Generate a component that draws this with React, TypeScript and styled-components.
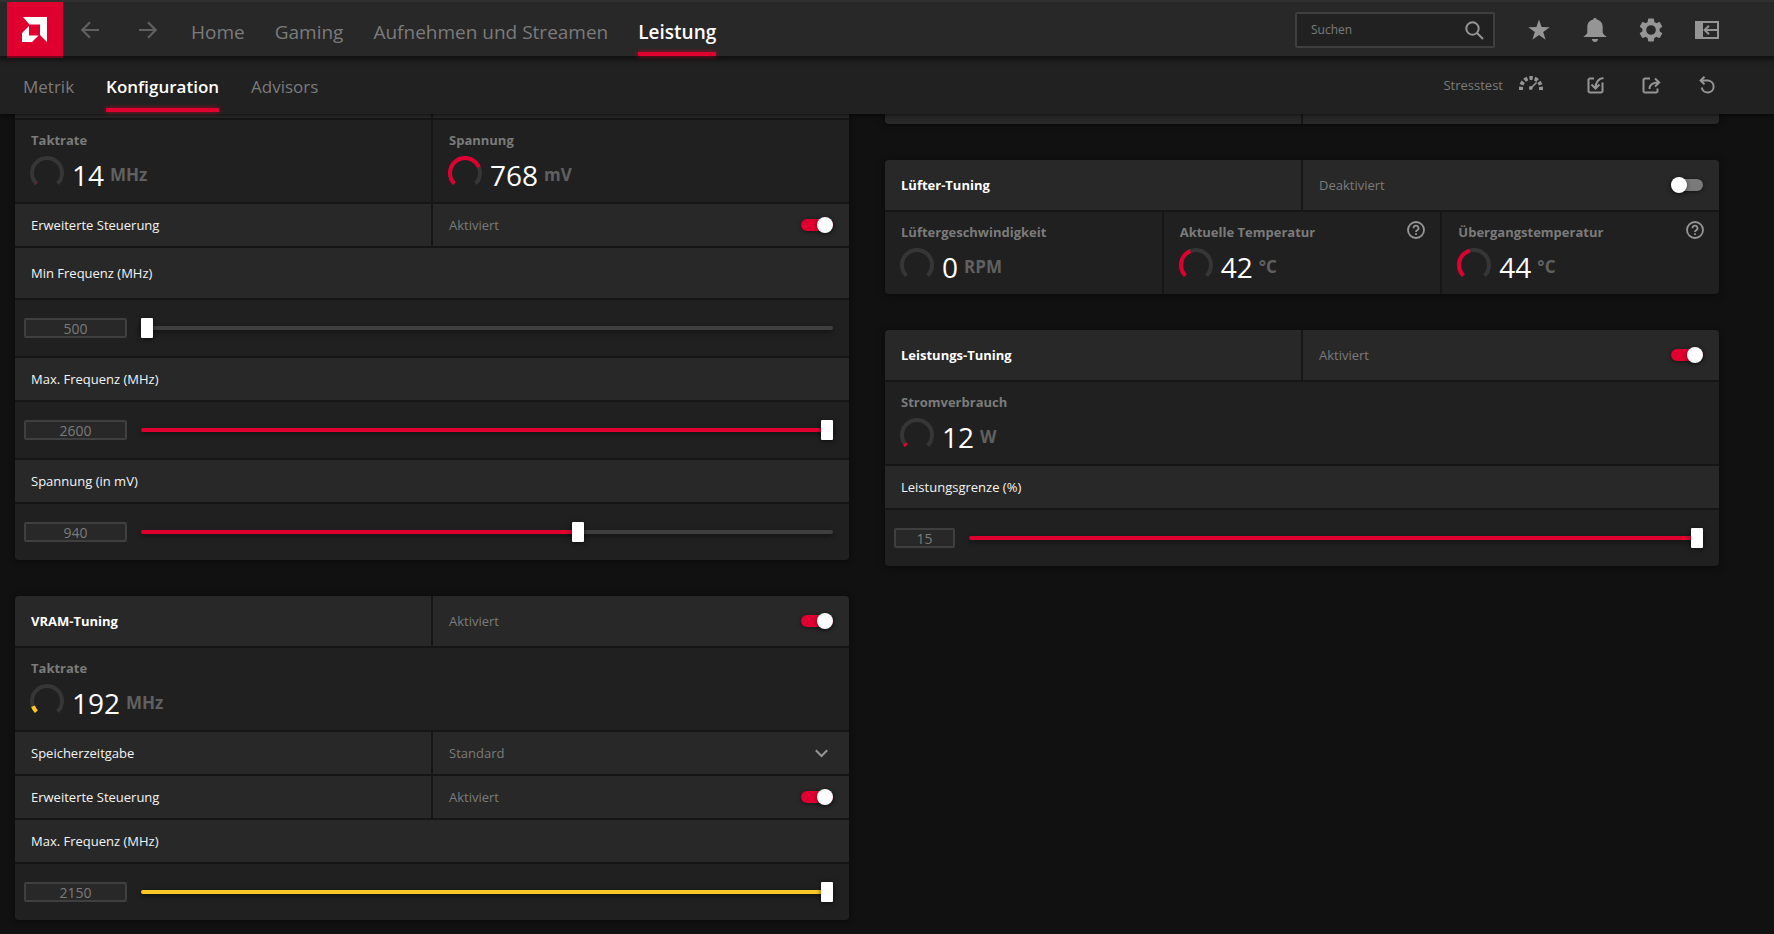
import React, { useId, useState } from "react";
import styled, { createGlobalStyle, css } from "styled-components";

const color = {
  page: "#111111",
  bar: "#282828",
  subBar: "#212121",
  row: "#282828",
  well: "#202020",
  line: "#161616",
  edge: "#3f3f3f",
  muted: "#7b7b7b",
  icon: "#959595",
  red: "#e0002f",
  yellow: "#ffc627",
};

const GlobalStyle = createGlobalStyle`
  * { box-sizing: border-box; }
  html { height: 100%; }
  body {
    margin: 0;
    height: 100%;
    overflow: hidden;
    background: ${color.page};
    color: #fff;
    font-family: "Segoe UI", "Open Sans", "Noto Sans", sans-serif;
    font-size: 13px;
    line-height: 18px;
  }
  #root { height: 100%; }
  button, input, select { font: inherit; color: inherit; margin: 0; }
`;

const Page = styled.div`
  display: flex;
  flex-direction: column;
  height: 100%;
`;

const TopBar = styled.header`
  position: relative;
  z-index: 3;
  display: flex;
  flex-shrink: 0;
  height: 56px;
  padding: 0 55px 0 7px;
  border-top: 2px solid #303030;
  background: ${color.bar};
  box-shadow: 0 2px 5px 2px rgba(0, 0, 0, 0.5);
`;

const Logo = styled.a`
  display: block;
  width: 56px;
  height: 56px;
  background: ${color.red};
  border-bottom: 2px solid #78001c;
`;

const IconButton = styled.button`
  display: grid;
  place-items: center;
  width: 24px;
  height: 24px;
  padding: 0;
  border: 0;
  background: none;
  color: ${color.icon};
`;

const History = styled.div`
  display: flex;
  align-items: center;
  gap: 34px;
  padding: 2px 31px 0 15px;
  ${IconButton} {
    color: #606060;
  }
`;

const Nav = styled.nav<{ $size: number; $gap: number }>`
  display: flex;
  gap: ${(p) => p.$gap}px;
  font-size: ${(p) => p.$size}px;
`;

const NavLink = styled.a<{ $active?: boolean }>`
  display: flex;
  align-items: center;
  padding: 9px 0 4px;
  color: ${color.muted};
  text-decoration: none;
  white-space: nowrap;
  ${(p) =>
    p.$active &&
    css`
      position: relative;
      color: #fff;
      font-weight: 600;
      &::after {
        content: "";
        position: absolute;
        left: 0;
        right: 0;
        bottom: 0;
        height: 4px;
        background: ${color.red};
        box-shadow: 0 0 5px rgba(224, 0, 47, 0.7);
      }
    `}
`;

const Tools = styled.div`
  display: flex;
  align-items: center;
  gap: 32px;
  margin-left: auto;
  padding-top: 2px;
`;

const SearchBox = styled.label`
  display: flex;
  align-items: center;
  width: 200px;
  height: 36px;
  padding: 0 9px 0 14px;
  border: 2px solid ${color.edge};
  border-radius: 2px;
  background: #212121;
  color: ${color.icon};
`;

const SearchInput = styled.input`
  flex: 1;
  min-width: 0;
  padding: 0;
  border: 0;
  outline: 0;
  background: none;
  font-size: 12px;
  &::placeholder {
    color: ${color.muted};
    opacity: 1;
  }
`;

const SubBar = styled.div`
  position: relative;
  z-index: 2;
  display: flex;
  flex-shrink: 0;
  height: 58px;
  padding: 0 55px 2px 23px;
  background: ${color.subBar};
  box-shadow: 0 1px 4px rgba(0, 0, 0, 0.6);
`;

const StressButton = styled.button`
  display: flex;
  align-items: center;
  gap: 16px;
  margin-right: 8px;
  padding: 0;
  border: 0;
  background: none;
  color: ${color.muted};
  line-height: 22px;
  svg {
    color: ${color.icon};
    margin-bottom: 4px;
  }
`;

const Workspace = styled.main`
  display: grid;
  grid-template-columns: minmax(0, 1fr) minmax(0, 1fr);
  align-items: start;
  gap: 36px;
  flex: 1;
  min-height: 0;
  padding: 0 55px 0 15px;
  overflow: hidden;
`;

const Column = styled.div<{ $scrolled: number }>`
  display: grid;
  gap: 36px;
  margin-top: -${(p) => p.$scrolled}px;
`;

const Card = styled.section`
  display: grid;
  gap: 2px;
  border-radius: 4px;
  overflow: hidden;
  background: ${color.line};
  box-shadow: 0 1px 6px rgba(0, 0, 0, 0.5);
`;

const Cells = styled.div<{ $count: number }>`
  display: grid;
  grid-template-columns: repeat(${(p) => p.$count}, minmax(0, 1fr));
  gap: 2px;
`;

const Cell = styled.div<{ $tall?: boolean }>`
  display: flex;
  align-items: center;
  justify-content: space-between;
  height: ${(p) => (p.$tall ? 50 : 42)}px;
  padding: 0 16px;
  background: ${color.row};
`;

const Title = styled.label`
  font-weight: 700;
`;

const Caption = styled.label`
  color: #f4f4f4;
`;

const State = styled.span`
  color: ${color.muted};
`;

const Switch = styled.input`
  appearance: none;
  display: flex;
  width: 32px;
  height: 12px;
  border-radius: 6px;
  background: #7a7a7a;
  box-shadow: 0 1px 4px rgba(0, 0, 0, 0.5);
  &::before {
    content: "";
    width: 16px;
    height: 16px;
    margin-top: -2px;
    border-radius: 50%;
    background: #fff;
    box-shadow: 0 1px 4px rgba(0, 0, 0, 0.5);
  }
  &:checked {
    justify-content: flex-end;
    background: ${color.red};
  }
`;

const SelectCell = styled.div`
  display: grid;
  grid-template-columns: minmax(0, 1fr);
  align-items: center;
  height: 42px;
  background: ${color.row};
  > * {
    grid-area: 1 / 1;
  }
  svg {
    justify-self: end;
    margin-right: 21px;
    color: ${color.icon};
    pointer-events: none;
  }
`;

const Select = styled.select`
  appearance: none;
  width: 100%;
  height: 42px;
  padding: 0 16px;
  border: 0;
  background: none;
  color: ${color.muted};
`;

const MetricCell = styled.div`
  height: 82px;
  padding: 9px 15px 0 16px;
  background: ${color.well};
`;

const MetricHead = styled.div`
  display: flex;
  justify-content: space-between;
  height: 24px;
  color: ${color.muted};
  font-weight: 700;
  line-height: 23px;
  ${IconButton} {
    width: 18px;
    height: 18px;
  }
`;

const Reading = styled.div`
  display: flex;
  align-items: center;
  height: 40px;
`;

const Dial = styled.svg`
  margin: 0 8px 0 -1px;
`;

const Value = styled.span`
  padding-top: 4px;
  color: #fff;
  font-size: 28px;
  line-height: 40px;
`;

const Unit = styled.span`
  margin-left: 6px;
  padding-top: 4px;
  color: #606060;
  font-size: 17px;
  font-weight: 700;
`;

const SliderCell = styled.div`
  display: flex;
  align-items: center;
  gap: 14px;
  height: 56px;
  padding: 0 16px 0 9px;
  background: ${color.well};
`;

const NumberBox = styled.input<{ $narrow?: boolean }>`
  width: ${(p) => (p.$narrow ? 61 : 103)}px;
  height: 20px;
  padding: 0;
  border: 2px solid ${color.edge};
  border-radius: 2px;
  background: ${color.row};
  color: ${color.muted};
  font-size: 14px;
  text-align: center;
`;

const Range = styled.input<{ $tint: string }>`
  appearance: none;
  flex: 1;
  min-width: 0;
  height: 20px;
  background: none;
  &::-webkit-slider-runnable-track {
    height: 4px;
    border-radius: 2px;
    background: linear-gradient(${(p) => p.$tint} 0 0) left / var(--fill) 100% no-repeat ${color.edge};
    box-shadow: 0 2px 5px rgba(0, 0, 0, 0.5);
  }
  &::-webkit-slider-thumb {
    appearance: none;
    width: 12px;
    height: 20px;
    margin-top: -8px;
    border-radius: 1px;
    background: #fff;
    box-shadow: 0 1px 5px rgba(0, 0, 0, 0.6);
  }
`;

const ArrowIcon = ({ flip = false }: { flip?: boolean }) => (
  <svg width="18" height="18" viewBox="0 0 18 18" fill="none" stroke="currentColor" strokeWidth="2.2">
    <path d={flip ? "M0 9h16M9 1.2 16.6 9 9 16.8" : "M18 9H2M9 1.2 1.4 9 9 16.8"} />
  </svg>
);

const SearchIcon = () => (
  <svg width="19" height="19" viewBox="0 0 19 19" fill="none" stroke="currentColor" strokeWidth="2">
    <circle cx="7.5" cy="7.5" r="6.2" />
    <path d="m12 12 6 6" />
  </svg>
);

const StarIcon = () => (
  <svg width="22" height="22" viewBox="0 0 22 22" fill="currentColor">
    <path d="m11 .5 2.6 7.6 8.1.1-6.5 4.8 2.4 7.8-6.6-4.7-6.6 4.7 2.4-7.8L.3 8.2l8.1-.1z" />
  </svg>
);

const BellIcon = () => (
  <svg width="24" height="24" viewBox="0 0 24 24" fill="currentColor">
    <path d="M12 0c1 0 1.7.6 1.9 1.5 3.4.8 5.8 3.700 5.800 7.200v5.800c0 1.400 1.800 2.500 4.100 4.500H.2c2.300-2 4.100-3.100 4.100-4.500V8.700c0-3.500 2.400-6.400 5.800-7.200C10.300.6 11 0 12 0zM8.800 21h6.400c-.4 1.800-1.600 3-3.200 3s-2.800-1.200-3.200-3z" />
  </svg>
);

const GearIcon = () => (
  <svg width="24" height="24" viewBox="2 2 20 20" fill="currentColor">
    <path d="M19.14 12.94c.04-.3.06-.61.06-.94 0-.32-.02-.64-.07-.94l2.03-1.58c.18-.14.23-.41.12-.61l-1.92-3.32c-.12-.22-.37-.29-.59-.22l-2.39.96c-.5-.38-1.03-.7-1.62-.94l-.36-2.54c-.04-.24-.24-.41-.48-.41h-3.84c-.24 0-.43.17-.47.41l-.36 2.54c-.59.24-1.13.57-1.62.94l-2.39-.96c-.22-.08-.47 0-.59.22L2.74 8.87c-.12.21-.08.47.12.61l2.03 1.58c-.05.3-.09.63-.09.94s.02.64.07.94l-2.03 1.58c-.18.14-.23.41-.12.61l1.92 3.32c.12.22.37.29.59.22l2.39-.96c.5.38 1.03.7 1.62.94l.36 2.54c.05.24.24.41.48.41h3.84c.24 0 .44-.17.47-.41l.36-2.54c.59-.24 1.13-.56 1.62-.94l2.39.96c.22.08.47 0 .59-.22l1.92-3.32c.12-.22.07-.47-.12-.61l-2.01-1.58zM12 16a4 4 0 1 1 0-8 4 4 0 0 1 0 8z" />
  </svg>
);

const DockIcon = () => (
  <svg width="24" height="18" viewBox="0 0 24 18" fill="none" stroke="currentColor" strokeWidth="2">
    <path d="M0 0h8v18H0z" fill="currentColor" stroke="none" />
    <path d="M1 1h22v16H1zM22 9H9.5M14 4.8 9.6 9l4.4 4.2" />
  </svg>
);

const StressIcon = () => (
  <svg width="24" height="14" viewBox="0 0 24 14" fill="none" stroke="currentColor">
    <path d="M2 14v-2a10 10 0 0 1 20 0v2" strokeWidth="4" strokeDasharray="3.4 1.933" />
    <path d="m11.5 12.5 6-6" strokeWidth="1.6" />
    <circle cx="11.8" cy="12" r="1.9" fill="currentColor" stroke="none" />
  </svg>
);

const ImportIcon = () => (
  <svg width="17" height="17" viewBox="0 0 17 17" fill="none" stroke="currentColor" strokeWidth="2">
    <path d="M7 1.5H3A1.500 1.500 0 0 0 1.500 3v11A1.500 1.500 0 0 0 3 15.500h11a1.500 1.500 0 0 0 1.500-1.500V5.500M16.500 1C12 1.500 8.700 4.500 8.500 11M4.500 7.500l4 4 4-4" />
  </svg>
);

const ExportIcon = () => (
  <svg width="19" height="17" viewBox="0 0 19 17" fill="none" stroke="currentColor" strokeWidth="2">
    <path d="M8 1.500H3A1.500 1.500 0 0 0 1.500 3v11A1.500 1.500 0 0 0 3 15.500h11a1.500 1.500 0 0 0 1.500-1.500v-2.500M7.500 12c0-4 2.500-6.500 9-6.500M13 1.500l4.200 4-4.200 4" />
  </svg>
);

const ResetIcon = () => (
  <svg width="16" height="18" viewBox="0 0 16 18" fill="none" stroke="currentColor" strokeWidth="2">
    <path d="M1.500 4.500H9a6 6 0 1 1-6.300 7M5.500.8 1.600 4.500l3.900 3.800" />
  </svg>
);

const ChevronIcon = () => (
  <svg width="13" height="9" viewBox="0 0 13 9" fill="none" stroke="currentColor" strokeWidth="2">
    <path d="m.8 1.200 5.700 5.800 5.700-5.800" />
  </svg>
);

const HelpIcon = () => (
  <svg width="18" height="18" viewBox="0 0 18 18" fill="none" stroke="currentColor" strokeWidth="1.8">
    <circle cx="9" cy="9" r="8" />
    <path d="M6.500 7.200a2.500 2.500 0 1 1 3.700 2.100c-.9.500-1.200.9-1.200 1.700M9 12.200v1.900" />
  </svg>
);

const dialArc = "M6.4 27.6A15 15 0 1 1 27.6 27.6";

type MetricProps = {
  label: string;
  value: string;
  unit: string;
  level: number;
  tint?: string;
  help?: boolean;
};

function Metric({ label, value, unit, level, tint = color.red, help }: MetricProps) {
  return (
    <MetricCell>
      <MetricHead>
        {label}
        {help && (
          <IconButton aria-label={`Hilfe zu ${label}`}>
            <HelpIcon />
          </IconButton>
        )}
      </MetricHead>
      <Reading>
        <Dial width="34" height="34" viewBox="0 0 34 34" fill="none" strokeWidth="4">
          <path d={dialArc} stroke="#363636" />
          {level > 0 && (
            <path d={dialArc} stroke={tint} pathLength={100} strokeDasharray={`${level} 200`} />
          )}
        </Dial>
        <Value>{value}</Value>
        <Unit>{unit}</Unit>
      </Reading>
    </MetricCell>
  );
}

type SwitchRowProps = { label: string; on?: boolean; heading?: boolean };

function SwitchRow({ label, on = false, heading }: SwitchRowProps) {
  const id = useId();
  const [checked, setChecked] = useState(on);
  const Label = heading ? Title : Caption;
  return (
    <Cells $count={2}>
      <Cell $tall={heading}>
        <Label htmlFor={id}>{label}</Label>
      </Cell>
      <Cell $tall={heading}>
        <State>{checked ? "Aktiviert" : "Deaktiviert"}</State>
        <Switch id={id} type="checkbox" checked={checked} onChange={(e) => setChecked(e.target.checked)} />
      </Cell>
    </Cells>
  );
}

type SliderRowProps = {
  label: string;
  min: number;
  max: number;
  start: number;
  tint?: string;
  tall?: boolean;
  narrow?: boolean;
};

function SliderRow({ label, min, max, start, tint = color.red, tall, narrow }: SliderRowProps) {
  const id = useId();
  const [value, setValue] = useState(start);
  const update = (text: string) => setValue(Number(text) || 0);
  const fill = { "--fill": `${((value - min) / (max - min)) * 100}%` } as React.CSSProperties;
  return (
    <>
      <Cell $tall={tall}>
        <Caption htmlFor={id}>{label}</Caption>
      </Cell>
      <SliderCell>
        <NumberBox
          $narrow={narrow}
          inputMode="numeric"
          aria-label={label}
          value={value}
          onChange={(e) => update(e.target.value)}
        />
        <Range
          id={id}
          type="range"
          min={min}
          max={max}
          value={value}
          $tint={tint}
          style={fill}
          onChange={(e) => update(e.target.value)}
        />
      </SliderCell>
    </>
  );
}

function TimingRow() {
  const id = useId();
  return (
    <Cells $count={2}>
      <Cell>
        <Caption htmlFor={id}>Speicherzeitgabe</Caption>
      </Cell>
      <SelectCell>
        <Select id={id} defaultValue="Standard">
          <option>Standard</option>
        </Select>
        <ChevronIcon />
      </SelectCell>
    </Cells>
  );
}

export default function App() {
  return (
    <Page>
      <GlobalStyle />
      <TopBar>
        <Logo href="#home" aria-label="AMD">
          <svg width="56" height="56" viewBox="0 0 56 56" fill="#fff">
            <path d="M16 15h24v25l-7-7V22.500H22.500zM22 24v9.500h9.500L25 40H15v-9z" />
          </svg>
        </Logo>
        <History>
          <IconButton aria-label="Zurück">
            <ArrowIcon />
          </IconButton>
          <IconButton aria-label="Vorwärts">
            <ArrowIcon flip />
          </IconButton>
        </History>
        <Nav $size={19} $gap={30}>
          <NavLink href="#home">Home</NavLink>
          <NavLink href="#gaming">Gaming</NavLink>
          <NavLink href="#aufnehmen">Aufnehmen und Streamen</NavLink>
          <NavLink href="#leistung" $active>
            Leistung
          </NavLink>
        </Nav>
        <Tools>
          <SearchBox>
            <SearchInput type="search" placeholder="Suchen" aria-label="Suchen" />
            <SearchIcon />
          </SearchBox>
          <IconButton aria-label="Favoriten">
            <StarIcon />
          </IconButton>
          <IconButton aria-label="Benachrichtigungen">
            <BellIcon />
          </IconButton>
          <IconButton aria-label="Einstellungen">
            <GearIcon />
          </IconButton>
          <IconButton aria-label="Andocken">
            <DockIcon />
          </IconButton>
        </Tools>
      </TopBar>
      <SubBar>
        <Nav $size={17} $gap={32}>
          <NavLink href="#metrik">Metrik</NavLink>
          <NavLink href="#konfiguration" $active>
            Konfiguration
          </NavLink>
          <NavLink href="#advisors">Advisors</NavLink>
        </Nav>
        <Tools>
          <StressButton>
            Stresstest
            <StressIcon />
          </StressButton>
          <IconButton aria-label="Importieren">
            <ImportIcon />
          </IconButton>
          <IconButton aria-label="Exportieren">
            <ExportIcon />
          </IconButton>
          <IconButton aria-label="Zurücksetzen">
            <ResetIcon />
          </IconButton>
        </Tools>
      </SubBar>
      <Workspace>
        <Column $scrolled={46}>
          <Card>
            <Cells $count={2}>
              <Cell $tall />
              <Cell $tall />
            </Cells>
            <Cells $count={2}>
              <Metric label="Taktrate" value="14" unit="MHz" level={0.5} />
              <Metric label="Spannung" value="768" unit="mV" level={75} />
            </Cells>
            <SwitchRow label="Erweiterte Steuerung" on />
            <SliderRow label="Min Frequenz (MHz)" min={500} max={2600} start={500} tall />
            <SliderRow label="Max. Frequenz (MHz)" min={500} max={2600} start={2600} />
            <SliderRow label="Spannung (in mV)" min={500} max={1195} start={940} />
          </Card>
          <Card>
            <SwitchRow label="VRAM-Tuning" on heading />
            <Metric label="Taktrate" value="192" unit="MHz" level={9} tint={color.yellow} />
            <TimingRow />
            <SwitchRow label="Erweiterte Steuerung" on />
            <SliderRow label="Max. Frequenz (MHz)" min={1750} max={2150} start={2150} tint={color.yellow} />
          </Card>
        </Column>
        <Column $scrolled={40}>
          <Card>
            <Cells $count={2}>
              <Cell $tall />
              <Cell $tall />
            </Cells>
          </Card>
          <Card>
            <SwitchRow label="Lüfter-Tuning" heading />
            <Cells $count={3}>
              <Metric label="Lüftergeschwindigkeit" value="0" unit="RPM" level={0} />
              <Metric label="Aktuelle Temperatur" value="42" unit="°C" level={42} help />
              <Metric label="Übergangstemperatur" value="44" unit="°C" level={44} help />
            </Cells>
          </Card>
          <Card>
            <SwitchRow label="Leistungs-Tuning" on heading />
            <Metric label="Stromverbrauch" value="12" unit="W" level={4} />
            <SliderRow label="Leistungsgrenze (%)" min={-6} max={15} start={15} narrow />
          </Card>
        </Column>
      </Workspace>
    </Page>
  );
}
